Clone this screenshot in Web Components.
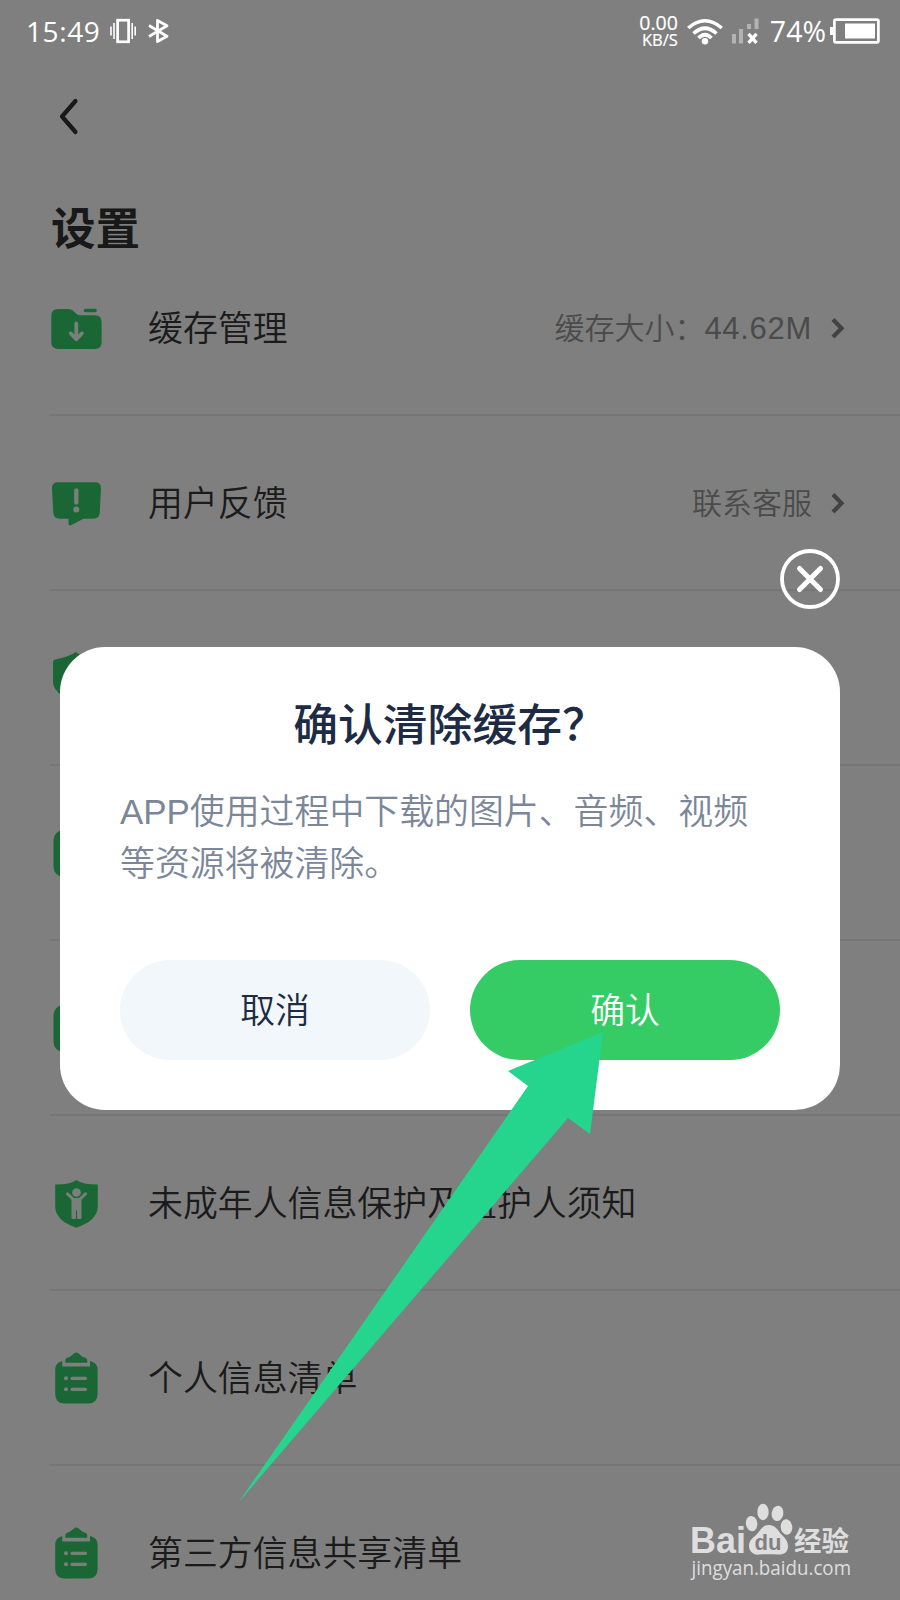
<!DOCTYPE html>
<html lang="zh-CN">
<head>
<meta charset="utf-8">
<title>设置</title>
<style>
html, body{
    margin: 0;
    background-color: white;
}
</style>
</head>
<body>
<settings-screen></settings-screen>

<script>
const status_bar = document.createElement('template');

status_bar.innerHTML = `
<style>
:host{
    display: flex;
    align-items: center;
    justify-content: space-between;
    box-sizing: border-box;
    height: 62px;
    padding: 0 20px 0 26px;
    color: white;
    font-family: "Open Sans", "Noto Sans", sans-serif;
    font-size: 28px;
    font-weight: 400;
}

.group{
    display: flex;
    align-items: center;
}

.time{
    letter-spacing: 0.600px;
}

.percent{
    margin-left: 10px;
    font-size: 28.500px;
}

.speed{
    display: flex;
    flex-direction: column;
    align-items: flex-end;
    font-size: 19.500px;
    line-height: 17px;
    margin: -1px 9px 0 0;
    -webkit-text-stroke: 0.200px white;
}

.unit{
    font-size: 16.500px;
}

svg{
    display: block;
    fill: none;
    stroke: white;
}
</style>

<div class="group">
    <span class="time">15:49</span>
    <svg width="28" height="26" viewBox="0 0 28 26" style="margin-left: 9px" stroke-width="1.600">
        <rect x="8.600" y="2.200" width="11" height="21.600" stroke-width="2.700"/>
        <path d="M5 5v16M2 8.500v9M23.200 5v16M26.200 8.500v9"/>
    </svg>
    <svg width="22" height="26" viewBox="0 0 22 26" style="margin-left: 11px" stroke-width="2.800" stroke-linejoin="round">
        <path d="M1 7.500L19 18.200 9.500 23.500V2.500L19 7.800 1 18.500"/>
    </svg>
</div>
<div class="group">
    <div class="speed"><span>0.00</span><span class="unit">KB/S</span></div>
    <svg width="36" height="28" viewBox="0 0 36 28" stroke-width="3.600">
        <path d="M1.200 11Q18 -3.500 34.800 11M6.500 16.500Q18 6 29.500 16.500M11.500 21Q18 14.500 24.500 21"/>
        <circle cx="18" cy="24.300" r="3.200" fill="white" stroke="none"/>
    </svg>
    <svg width="28" height="26" viewBox="0 0 28 26" style="margin-left: 9px">
        <path d="M2 16v9.500M9 11v14.500M17 6v5M24.500 0.500v10.500" stroke="#b3b3b3" stroke-width="4"/>
        <path d="M16.500 15.800l8 9M24.500 15.800l-8 9" stroke-width="3.300"/>
    </svg>
    <span class="percent">74%</span>
    <svg width="50" height="26" viewBox="0 0 50 26" style="margin-left: 4px">
        <rect x="4.400" y="1.700" width="44" height="22.600" rx="1.500" stroke-width="2.700"/>
        <path d="M0 9h3v8H0z" fill="white" stroke="none"/>
        <path d="M15 5.500h30v15H15z" fill="white" stroke="none"/>
    </svg>
</div>
`

class StatusBar extends HTMLElement {
    constructor() {
        super();
        this.attachShadow({mode: 'open'});
        this.shadowRoot.appendChild(status_bar.content.cloneNode(true));
    }
}

window.customElements.define('status-bar', StatusBar);


// green icons, all on a 52x52 grid
const icons = {
    folder: `
        <path d="M8 7H19Q22 7 24 9.500L26 11.500Q27.500 13.200 30 13.200H45Q51.600 13.200 51.600 20V40.500Q51.600 47 45 47H8Q1.300 47 1.300 40V14Q1.300 7 8 7Z"/>
        <path class="line-green" d="M35.500 8.500H45" stroke-width="3.600"/>
        <path class="line" d="M26.300 21.500V37M20.800 31.500L26.300 37.300 31.800 31.500" stroke-width="3.800"/>`,
    feedback: `
        <path d="M8 5.300H45Q51.300 5.300 51 11.500L49.800 35.500Q49.400 41.700 43.500 41.700H33.500L21 48.200Q18.500 49 18.500 46.500V41.700H9.500Q3.700 41.700 3.200 35.500L2 11.500Q1.800 5.300 8 5.300Z"/>
        <path class="line" d="M26.300 13.500V25.500" stroke-width="4.300"/>
        <circle class="light" cx="26.300" cy="32.500" r="3"/>`,
    privacy: `
        <path d="M26 0Q18 5 7 7Q3 7.500 3 10V31C4 39 13 46 26 51C39 46 48 39 49 31V12Q49 9 45 8.500Q34 7 26 0Z"/>`,
    card: `
        <rect x="3.500" y="3" width="46" height="47" rx="10"/>`,
    child: `
        <path d="M26.400 3Q20 7.700 5.200 7.600V29C5.200 40 14 46.500 26.400 50.700C38.800 46.500 47.800 40 47.800 29V7.600Q33 7.700 26.400 3Z"/>
        <circle class="light" cx="26.500" cy="15.500" r="4.300"/>
        <path class="light" d="M21.500 21H31.500V40.500Q31.500 42 30 42H28Q27 42 27 40.500V33.500H26V40.500Q26 42 25 42H23Q21.500 42 21.500 40.500Z"/>
        <path class="line" d="M17.500 16.800L23 22M35.500 16.800L30 22" stroke-width="3"/>`,
    list: `
        <path d="M12.300 9V14.500H40V9Q47.600 10.500 47.600 18V42Q47.600 51.500 38 51.500H14.500Q5.200 51.500 5.200 42V18Q5.200 10.500 12.300 9Z"/>
        <path d="M15.300 10.800V8.500Q15.300 5.500 19.500 5L24 1.500Q26.300 -0.300 28.600 1.500L33 5Q37.300 5.500 37.300 8.500V10.800Z"/>
        <path class="line" d="M22 26.300H35.500M22 37.300H35.500" stroke-width="3.200"/>
        <circle class="light" cx="16" cy="26.300" r="2"/>
        <circle class="light" cx="16" cy="37.300" r="2"/>`
};

const setting_row = document.createElement('template');

setting_row.innerHTML = `
<style>
:host{
    display: flex;
    align-items: center;
    box-sizing: border-box;
    flex: none;
    height: 175px;
    margin-left: 50px;
    padding-right: 54px;
    border-bottom: 2px solid #ededed;
    font-size: 34.900px;
    line-height: 50px;
    color: #363636;
}

.icon{
    width: 52px;
    height: 52px;
    margin-right: 46px;
    overflow: visible;
    fill: #35cf6a;
}

.label{
    padding-top: 3px;
}

.light{
    fill: #f2fff6;
}

.line{
    fill: none;
    stroke: #f2fff6;
    stroke-linecap: round;
    stroke-linejoin: round;
}

.line-green{
    fill: none;
    stroke: #35cf6a;
    stroke-linecap: round;
}

.value{
    display: flex;
    align-items: center;
    margin-left: auto;
    font-size: 30px;
    color: #969696;
}

.value slot{
    display: block;
    padding-top: 2px;
}

.value svg{
    margin-left: 18px;
    fill: none;
    stroke: #858585;
    stroke-width: 4.200;
}
</style>

<svg class="icon" viewBox="0 0 52 52"></svg>
<div class="label"><slot></slot></div>
`

class SettingRow extends HTMLElement {
    constructor() {
        super();
        this.attachShadow({mode: 'open'});
        this.shadowRoot.appendChild(setting_row.content.cloneNode(true));
    }

    connectedCallback() {
        this.shadowRoot.querySelector('.icon').innerHTML = icons[this.getAttribute('icon')];
        if (this.querySelector('[slot=value]')) {
            const value = document.createElement('div');
            value.className = 'value';
            value.innerHTML = `
                <slot name="value"></slot>
                <svg width="16" height="24" viewBox="0 0 16 24"><path d="M3 3.500L11.500 12.300 3 21"/></svg>
            `;
            this.shadowRoot.appendChild(value);
        }
    }
}

window.customElements.define('setting-row', SettingRow);


const confirm_dialog = document.createElement('template');

confirm_dialog.innerHTML = `
<style>
:host{
    display: flex;
    flex-direction: column;
    width: 780px;
}

.close{
    align-self: flex-end;
    display: block;
    margin-bottom: 38px;
    fill: none;
    stroke: white;
}

.panel{
    display: flex;
    flex-direction: column;
    box-sizing: border-box;
    height: 463px;
    padding: 45px 60px 50px;
    border-radius: 45px;
    background-color: white;
}

.title{
    text-align: center;
    font-size: 44.800px;
    line-height: 66px;
    font-weight: 500;
    color: #1d2b45;
}

.text{
    margin-top: 28px;
    font-size: 34.900px;
    line-height: 52px;
    color: #7b8799;
}

.buttons{
    display: flex;
    gap: 40px;
    margin-top: auto;
}

.button{
    display: flex;
    align-items: center;
    justify-content: center;
    flex: 1;
    height: 100px;
    box-sizing: border-box;
    padding-bottom: 4px;
    border-radius: 50px;
    font-size: 34.800px;
    background-color: #f2f7fc;
    color: #1d2b45;
}

.ok{
    background-color: #35cc66;
    color: white;
}
</style>

<svg class="close" width="60" height="60" viewBox="0 0 60 60">
    <circle cx="30" cy="30" r="28" stroke-width="3.800"/>
    <path d="M19.500 19.500L40.500 40.500M40.500 19.500L19.500 40.500" stroke-width="5" stroke-linecap="round"/>
</svg>
<div class="panel">
    <div class="title"><slot name="title"></slot></div>
    <div class="text"><slot></slot></div>
    <div class="buttons">
        <div class="button"><slot name="cancel"></slot></div>
        <div class="button ok"><slot name="ok"></slot></div>
    </div>
</div>
`

class ConfirmDialog extends HTMLElement {
    constructor() {
        super();
        this.attachShadow({mode: 'open'});
        this.shadowRoot.appendChild(confirm_dialog.content.cloneNode(true));
    }
}

window.customElements.define('confirm-dialog', ConfirmDialog);


const site_mark = document.createElement('template');

site_mark.innerHTML = `
<style>
:host{
    display: block;
    width: 170px;
    height: 84px;
}

svg{
    display: block;
    fill: #dedede;
}
</style>

<svg width="170" height="84" viewBox="0 0 170 84">
    <text x="2" y="53" font-family="Liberation Sans, sans-serif" font-weight="700" font-size="36.500" textLength="56" lengthAdjust="spacingAndGlyphs">Bai</text>
    <ellipse cx="63.500" cy="23.500" rx="5.700" ry="7.700" transform="rotate(-8 64 23)"/>
    <ellipse cx="75" cy="12" rx="5.700" ry="8.200"/>
    <ellipse cx="89.500" cy="13.500" rx="5.900" ry="7.700" transform="rotate(10 90 13.500)"/>
    <ellipse cx="98.500" cy="27" rx="5.800" ry="7.700" transform="rotate(-6 98.800 27)"/>
    <path d="M80.500 25C88 25 90 31 94 35C98 39 100 42 100 46.500C100 52 96 55 90 54.500C86 54 76 54 72 54.500C65 55.500 61 51 61 46C61 40 65 38 69 34C73 29 75 25 80.500 25Z"/>
    <text x="66.500" y="50" fill="#808080" font-family="Liberation Sans, sans-serif" font-weight="700" font-size="22.500" textLength="27" lengthAdjust="spacingAndGlyphs">du</text>
    <text x="106" y="51" font-family="Noto Sans CJK SC, sans-serif" font-weight="700" font-size="27" textLength="55" lengthAdjust="spacingAndGlyphs">经验</text>
    <text x="3.500" y="75" font-family="Open Sans, Noto Sans, sans-serif" font-weight="500" font-size="19.500" textLength="159.500" lengthAdjust="spacingAndGlyphs">jingyan.baidu.com</text>
</svg>
`

class SiteMark extends HTMLElement {
    constructor() {
        super();
        this.attachShadow({mode: 'open'});
        this.shadowRoot.appendChild(site_mark.content.cloneNode(true));
    }
}

window.customElements.define('site-mark', SiteMark);


const settings_screen = document.createElement('template');

settings_screen.innerHTML = `
<style>
:host{
    display: block;
    position: relative;
    width: 900px;
    height: 1600px;
    overflow: hidden;
    font-family: "Liberation Sans", "Noto Sans CJK SC", sans-serif;
    font-weight: 350;
}

.page{
    display: flex;
    flex-direction: column;
    height: 1600px;
    overflow: hidden;
    background-color: white;
}

.back{
    flex: none;
    margin: 96px 0 0 56px;
    fill: none;
    stroke: #333333;
    stroke-width: 4.200;
    stroke-linecap: round;
    stroke-linejoin: round;
}

.heading{
    flex: none;
    height: 105px;
    box-sizing: border-box;
    padding: 57px 0 0 51px;
    font-family: "Noto Sans CJK SC", sans-serif;
    font-size: 44.500px;
    line-height: 66px;
    font-weight: 700;
    color: #333333;
}

.number{
    font-size: 31px;
    letter-spacing: 0.700px;
}

.overlay{
    position: absolute;
    inset: 0;
    display: flex;
    flex-direction: column;
    background-color: rgba(0, 0, 0, 0.5);
}

confirm-dialog{
    margin: 487px 0 0 60px;
}

.pointer{
    position: absolute;
    left: 237px;
    top: 1031px;
}

site-mark{
    position: absolute;
    left: 688px;
    top: 1500px;
}
</style>

<div class="page">
    <svg class="back" width="24" height="40" viewBox="0 0 24 40"><path d="M19.500 5L6 20.500 19.500 36"/></svg>
    <div class="heading">设置</div>
    <setting-row icon="folder">缓存管理<span slot="value">缓存大小：<span class="number">44.62M</span></span></setting-row>
    <setting-row icon="feedback">用户反馈<span slot="value">联系客服</span></setting-row>
    <setting-row icon="privacy"></setting-row>
    <setting-row icon="card"></setting-row>
    <setting-row icon="card"></setting-row>
    <setting-row icon="child">未成年人信息保护及监护人须知</setting-row>
    <setting-row icon="list">个人信息清单</setting-row>
    <setting-row icon="list">第三方信息共享清单</setting-row>
</div>
<div class="overlay">
    <status-bar></status-bar>
    <confirm-dialog>
        <span slot="title">确认清除缓存？</span>
        APP使用过程中下载的图片、音频、视频等资源将被清除。
        <span slot="cancel">取消</span>
        <span slot="ok">确认</span>
    </confirm-dialog>
</div>
<svg class="pointer" width="368" height="474" viewBox="0 0 368 474">
    <path d="M366 1L271 40 291 55 1 472 331 87 353 103Z" fill="#25d58d"/>
</svg>
<site-mark></site-mark>
`

class SettingsScreen extends HTMLElement {
    constructor() {
        super();
        this.attachShadow({mode: 'open'});
        this.shadowRoot.appendChild(settings_screen.content.cloneNode(true));
    }
}

window.customElements.define('settings-screen', SettingsScreen);
</script>
</body>
</html>
